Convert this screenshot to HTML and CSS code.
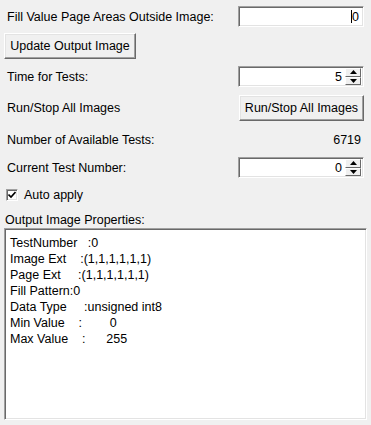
FILE: index.html
```html
<!DOCTYPE html>
<html>
<head>
<meta charset="utf-8">
<link rel="stylesheet" href="styles.css">
</head>
<body>
<div class="panel">
  <div class="row r1">
    <span class="label">Fill Value Page Areas Outside Image:</span>
    <div class="field"><span class="caret"></span><span class="val">0</span></div>
  </div>
  <div class="row r2">
    <button class="btn btn-update">Update Output Image</button>
  </div>
  <div class="row r3">
    <span class="label">Time for Tests:</span>
    <div class="field spin">
      <span class="val">5</span>
      <div class="spinbtns">
        <span class="sb up"><svg width="7" height="4" viewBox="0 0 7 4"><path d="M3.5 0 L7 4 L0 4 Z" fill="#000"/></svg></span>
        <span class="sb down"><svg width="7" height="4" viewBox="0 0 7 4"><path d="M0 0 L7 0 L3.5 4 Z" fill="#000"/></svg></span>
      </div>
    </div>
  </div>
  <div class="row r4">
    <span class="label">Run/Stop All Images</span>
    <button class="btn btn-run">Run/Stop All Images</button>
  </div>
  <div class="row r5">
    <span class="label">Number of Available Tests:</span>
    <span class="num">6719</span>
  </div>
  <div class="row r6">
    <span class="label">Current Test Number:</span>
    <div class="field spin">
      <span class="val">0</span>
      <div class="spinbtns">
        <span class="sb up"><svg width="7" height="4" viewBox="0 0 7 4"><path d="M3.5 0 L7 4 L0 4 Z" fill="#000"/></svg></span>
        <span class="sb down"><svg width="7" height="4" viewBox="0 0 7 4"><path d="M0 0 L7 0 L3.5 4 Z" fill="#000"/></svg></span>
      </div>
    </div>
  </div>
  <div class="row r7">
    <span class="check"><svg width="8" height="8" viewBox="0 0 8 8"><path d="M0.5 3.5 L3 6 L7.5 1" fill="none" stroke="#000" stroke-width="1.6"/></svg></span>
    <span class="chklabel">Auto apply</span>
  </div>
  <div class="row r8">
    <span class="label grp">Output Image Properties:</span>
  </div>
  <div class="textbox">
    <div class="line">TestNumber   :0</div>
    <div class="line">Image Ext    :(1,1,1,1,1,1)</div>
    <div class="line">Page Ext     :(1,1,1,1,1,1)</div>
    <div class="line">Fill Pattern:0</div>
    <div class="line">Data Type     :unsigned int8</div>
    <div class="line">Min Value    :        0</div>
    <div class="line">Max Value    :      255</div>
  </div>
</div>
</body>
</html>
```

FILE: styles.css
```css
html, body {
  margin: 0;
  padding: 0;
  background: #f0f0f0;
}
body {
  width: 371px;
  height: 425px;
  overflow: hidden;
  font-family: "Liberation Sans", Arial, sans-serif;
  font-size: 12.5px;
  color: #000;
}
.panel {
  display: flex;
  flex-direction: column;
  padding: 6px 4px 0 4px;
}
.row {
  display: flex;
  align-items: center;
  justify-content: space-between;
  padding-right: 3px;
}
.r1 { height: 21px; }
.r2 { height: 26px; margin-top: 6px; }
.r3 { height: 21px; margin-top: 7px; }
.r4 { height: 26px; margin-top: 8px; }
.r5 { height: 21px; margin-top: 8px; }
.r6 { height: 21px; margin-top: 7px; }
.r7 { height: 18px; margin-top: 8px; justify-content: flex-start; padding-left: 2px; }
.r8 { height: 17px; margin-top: 7px; }
.label { padding-left: 3px; }
.label.grp { padding-left: 1px; }
.num { padding-right: 3px; }
.field {
  box-sizing: border-box;
  width: 126px;
  height: 21px;
  background: #fff;
  border-top: 1px solid #a0a0a0;
  border-left: 1px solid #a0a0a0;
  border-right: 1px solid #fff;
  border-bottom: 1px solid #fff;
  box-shadow: inset 1px 1px 0 #696969, inset -1px -1px 0 #e3e3e3;
  display: flex;
  align-items: center;
  justify-content: flex-end;
  padding-right: 4px;
}
.caret {
  width: 1px;
  height: 13px;
  background: #000;
}
.spin { padding-right: 2px; }
.spin .val { margin-right: 3px; }
.spinbtns {
  display: flex;
  flex-direction: column;
  width: 16px;
  height: 17px;
}
.sb {
  box-sizing: border-box;
  flex: 1;
  display: flex;
  align-items: center;
  justify-content: center;
  background: #f0f0f0;
  border-top: 1px solid #fff;
  border-left: 1px solid #fff;
  border-right: 1px solid #696969;
  border-bottom: 1px solid #696969;
}
.btn {
  box-sizing: border-box;
  height: 26px;
  font-family: inherit;
  font-size: 12.5px;
  color: #000;
  background: #f0f0f0;
  border-top: 1px solid #fff;
  border-left: 1px solid #fff;
  border-right: 1px solid #696969;
  border-bottom: 1px solid #696969;
  box-shadow: inset -1px -1px 0 #a0a0a0, inset 1px 1px 0 #e3e3e3;
  padding: 0;
  margin: 0;
}
.btn-update { width: 132px; }
.btn-run { width: 125px; }
.check {
  box-sizing: border-box;
  width: 12px;
  height: 12px;
  background: #fff;
  border-top: 1px solid #a0a0a0;
  border-left: 1px solid #a0a0a0;
  border-right: 1px solid #fff;
  border-bottom: 1px solid #fff;
  box-shadow: inset 1px 1px 0 #696969, inset -1px -1px 0 #e3e3e3;
  display: flex;
  align-items: center;
  justify-content: center;
}
.chklabel { margin-left: 6px; }
.textbox {
  box-sizing: border-box;
  height: 192px;
  width: 363px;
  background: #fff;
  border-top: 1px solid #a0a0a0;
  border-left: 1px solid #a0a0a0;
  border-right: 1px solid #fff;
  border-bottom: 1px solid #fff;
  box-shadow: inset 1px 1px 0 #696969, inset -1px -1px 0 #e3e3e3;
  padding: 6px 5px;
}
.line {
  height: 16px;
  line-height: 16px;
  white-space: pre;
}
```
